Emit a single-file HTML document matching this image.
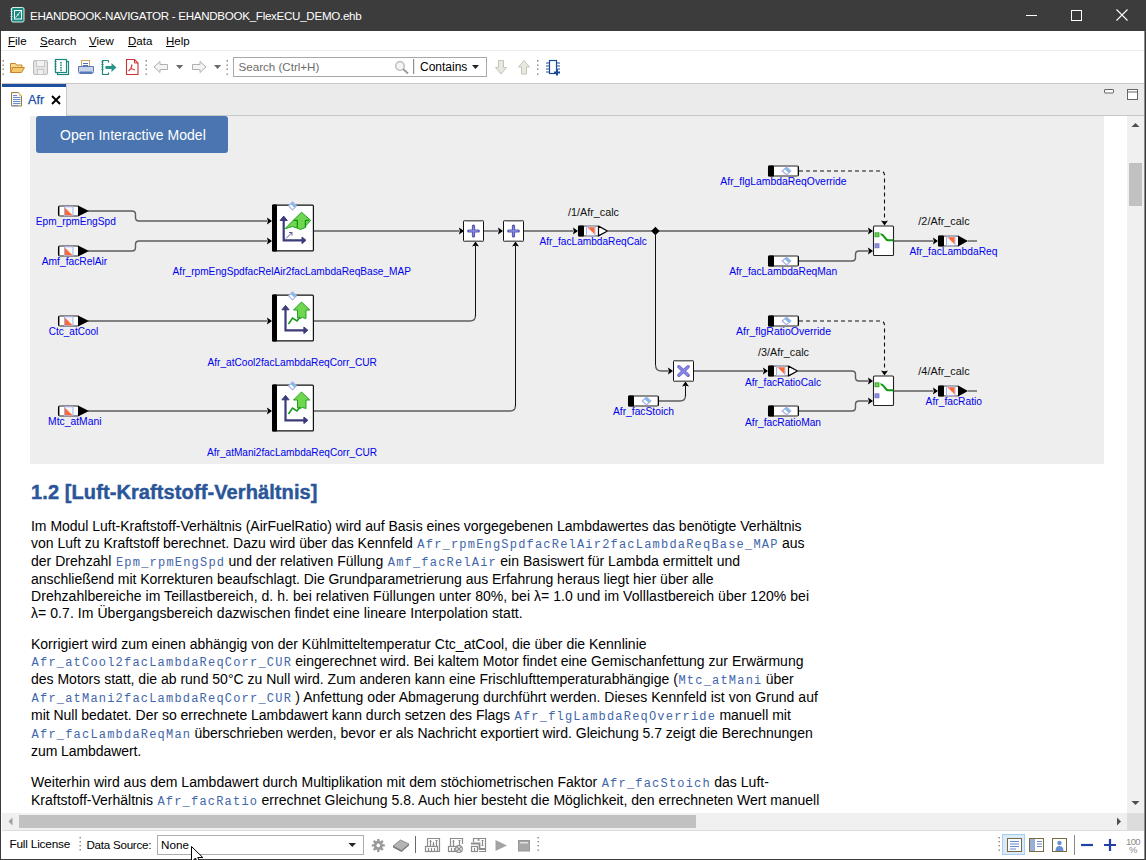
<!DOCTYPE html>
<html><head><meta charset="utf-8">
<style>
html,body{margin:0;padding:0;width:1146px;height:860px;overflow:hidden;background:#fff;font-family:"Liberation Sans",sans-serif;}
.a{position:absolute;}
.t{position:absolute;white-space:nowrap;line-height:1;}
#title{left:0;top:0;width:1146px;height:31px;background:#3c3c3c;}
#menu{left:0;top:31px;width:1146px;height:19px;background:#fff;border-bottom:1px solid #ececec;}
.mi{position:absolute;top:36px;font-size:11.5px;color:#000;}
#tabbar{left:2px;top:83px;width:1142px;height:31px;background:#ebebeb;border-top:1px solid #c8c8c8;border-bottom:1px solid #c8c8c8;}
#doc{left:2px;top:116px;width:1125px;height:697px;background:#fff;overflow:hidden;}
#vscroll{left:1127px;top:116px;width:17px;height:697px;background:#f0f0f0;}
#hscroll{left:2px;top:813px;width:1125px;height:17px;background:#f0f0f0;}
#status{left:2px;top:830px;width:1142px;height:28px;background:#fff;border-top:1px solid #dcdcdc;}
.p{position:absolute;left:29px;white-space:nowrap;font-size:14px;color:#000;line-height:1;letter-spacing:0px;}
.c{font-family:"Liberation Mono",monospace;font-size:12px;color:#3f66aa;letter-spacing:1.2px;padding-left:0.6px;margin-right:-0.6px;}
</style></head><body>
<div id="title" class="a"></div>
<div class="a" style="left:0;top:0;width:1px;height:860px;background:#3c3c3c;z-index:5"></div>
<div class="a" style="left:1144px;top:31px;width:1px;height:829px;background:#8a8a8a;z-index:5"></div>
<div class="a" style="left:1145px;top:0;width:1px;height:860px;background:#3c3c3c;z-index:5"></div>
<div class="a" style="left:0;top:859px;width:1146px;height:1px;background:#3c3c3c;z-index:5"></div>
<div class="t" style="left:30px;top:9.5px;font-size:11.6px;letter-spacing:-0.29px;color:#fff;">EHANDBOOK-NAVIGATOR - EHANDBOOK_FlexECU_DEMO.ehb</div>

<div id="menu" class="a"></div>
<div class="t mi" style="left:8px"><u>F</u>ile</div>
<div class="t mi" style="left:40px"><u>S</u>earch</div>
<div class="t mi" style="left:89px"><u>V</u>iew</div>
<div class="t mi" style="left:128px"><u>D</u>ata</div>
<div class="t mi" style="left:166px"><u>H</u>elp</div>

<div id="tabbar" class="a"></div>
<div class="a" style="left:2px;top:84px;width:64px;height:32px;background:#fff;border-right:1px solid #c8c8c8;"></div>
<div class="a" style="left:2px;top:84px;width:64px;height:3px;background:#1c4fa0;"></div>
<div class="t" style="left:28px;top:93.5px;font-size:12.6px;color:#1a4eaa;-webkit-text-stroke:0.25px #1a4eaa;">Afr</div>

<div id="doc" class="a">
  <div class="a" style="left:28px;top:0;width:1074px;height:348px;background:#eeeeee;"></div>
<div class="p" id="L0" style="top:403.2px;letter-spacing:-0.016px">Im Modul Luft-Kraftstoff-Verhältnis (AirFuelRatio) wird auf Basis eines vorgegebenen Lambdawertes das benötigte Verhältnis</div>
<div class="p" id="L1" style="top:420.2px">von Luft zu Kraftstoff berechnet. Dazu wird über das Kennfeld <span class="c">Afr_rpmEngSpdfacRelAir2facLambdaReqBase_MAP</span> aus</div>
<div class="p" id="L2" style="top:437.7px;letter-spacing:0.025px">der Drehzahl <span class="c">Epm_rpmEngSpd</span> und der relativen Füllung <span class="c">Amf_facRelAir</span> ein Basiswert für Lambda ermittelt und</div>
<div class="p" id="L3" style="top:455.7px;letter-spacing:-0.028px">anschließend mit Korrekturen beaufschlagt. Die Grundparametrierung aus Erfahrung heraus liegt hier über alle</div>
<div class="p" id="L4" style="top:472.9px;letter-spacing:0.054px">Drehzahlbereiche im Teillastbereich, d. h. bei relativen Füllungen unter 80%, bei λ= 1.0 und im Volllastbereich über 120% bei</div>
<div class="p" id="L5" style="top:490.2px;letter-spacing:0.063px">λ= 0.7. Im Übergangsbereich dazwischen findet eine lineare Interpolation statt.</div>
<div class="p" id="L6" style="top:521.2px">Korrigiert wird zum einen abhängig von der Kühlmitteltemperatur Ctc_atCool, die über die Kennlinie</div>
<div class="p" id="L7" style="top:538.2px"><span class="c">Afr_atCool2facLambdaReqCorr_CUR</span> eingerechnet wird. Bei kaltem Motor findet eine Gemischanfettung zur Erwärmung</div>
<div class="p" id="L8" style="top:556.2px">des Motors statt, die ab rund 50°C zu Null wird. Zum anderen kann eine Frischlufttemperaturabhängige (<span class="c">Mtc_atMani</span> über</div>
<div class="p" id="L9" style="top:574.2px;letter-spacing:0.033px"><span class="c">Afr_atMani2facLambdaReqCorr_CUR</span> ) Anfettung oder Abmagerung durchführt werden. Dieses Kennfeld ist von Grund auf</div>
<div class="p" id="L10" style="top:592.2px;letter-spacing:-0.025px">mit Null bedatet. Der so errechnete Lambdawert kann durch setzen des Flags <span class="c">Afr_flgLambdaReqOverride</span> manuell mit</div>
<div class="p" id="L11" style="top:610.2px;letter-spacing:-0.013px"><span class="c">Afr_facLambdaReqMan</span> überschrieben werden, bevor er als Nachricht exportiert wird. Gleichung 5.7 zeigt die Berechnungen</div>
<div class="p" id="L12" style="top:628.2px;letter-spacing:-0.073px">zum Lambdawert.</div>
<div class="p" id="L13" style="top:659.2px;letter-spacing:0.018px">Weiterhin wird aus dem Lambdawert durch Multiplikation mit dem stöchiometrischen Faktor <span class="c">Afr_facStoich</span> das Luft-</div>
<div class="p" id="L14" style="top:677.2px">Kraftstoff-Verhältnis <span class="c">Afr_facRatio</span> errechnet Gleichung 5.8. Auch hier besteht die Möglichkeit, den errechneten Wert manuell</div>
</div>

<svg class="a" style="left:0;top:0;z-index:2" width="1146" height="464" viewBox="0 0 1146 464">
<path d="M88,211 H132.0 Q135.5,211 135.5,214.5 V217.5 Q135.5,221 139.0,221 H267" fill="none" stroke="#5e5e5e" stroke-width="1.4"/>
<path d="M88,251 H132.0 Q135.5,251 135.5,247.5 V244.5 Q135.5,241 139.0,241 H267" fill="none" stroke="#5e5e5e" stroke-width="1.4"/>
<path d="M314,231 H459" fill="none" stroke="#5e5e5e" stroke-width="1.4"/>
<path d="M459,227.5 L464,231 L459,234.5 Q460.5,231 459,227.5Z" fill="#000"/>
<path d="M267,217.5 L272,221 L267,224.5 Q268.5,221 267,217.5Z" fill="#000"/>
<path d="M267,237.5 L272,241 L267,244.5 Q268.5,241 267,237.5Z" fill="#000"/>
<path d="M484,231 H498" fill="none" stroke="#5e5e5e" stroke-width="1.4"/>
<path d="M498,227.5 L503,231 L498,234.5 Q499.5,231 498,227.5Z" fill="#000"/>
<path d="M524,231 H573" fill="none" stroke="#5e5e5e" stroke-width="1.4"/>
<path d="M573,227.5 L578,231 L573,234.5 Q574.5,231 573,227.5Z" fill="#000"/>
<path d="M608,231 H868" fill="none" stroke="#5e5e5e" stroke-width="1.4"/>
<path d="M868,227.5 L873,231 L868,234.5 Q869.5,231 868,227.5Z" fill="#000"/>
<path d="M655.4,226.8 L659.6,231 L655.4,235.2 L651.2,231Z" fill="#000"/>
<path d="M655.5,231 V365" stroke="#111" stroke-width="1"/>
<path d="M655.5,365 Q655.5,371 661.5,371 H668" fill="none" stroke="#5e5e5e" stroke-width="1.4"/>
<path d="M668,367.5 L673,371 L668,374.5 Q669.5,371 668,367.5Z" fill="#000"/>
<path d="M88,321 H267" fill="none" stroke="#5e5e5e" stroke-width="1.4"/>
<path d="M267,317.5 L272,321 L267,324.5 Q268.5,321 267,317.5Z" fill="#000"/>
<path d="M314,321 H470 Q475.5,321 475.5,315.5" fill="none" stroke="#5e5e5e" stroke-width="1.4"/>
<path d="M475.5,316 V246" stroke="#111" stroke-width="1"/>
<path d="M472.0,246.5 L475.5,241.5 L479.0,246.5 Q475.5,245.0 472.0,246.5Z" fill="#000"/>
<path d="M88,411 H267" fill="none" stroke="#5e5e5e" stroke-width="1.4"/>
<path d="M267,407.5 L272,411 L267,414.5 Q268.5,411 267,407.5Z" fill="#000"/>
<path d="M314,411 H510 Q515.5,411 515.5,405.5" fill="none" stroke="#5e5e5e" stroke-width="1.4"/>
<path d="M515.5,406 V246" stroke="#111" stroke-width="1"/>
<path d="M512.0,246.5 L515.5,241.5 L519.0,246.5 Q515.5,245.0 512.0,246.5Z" fill="#000"/>
<path d="M694,371 H763" fill="none" stroke="#5e5e5e" stroke-width="1.4"/>
<path d="M763,367.5 L768,371 L763,374.5 Q764.5,371 763,367.5Z" fill="#000"/>
<path d="M659,401 H680 Q685.5,401 685.5,395.5" fill="none" stroke="#5e5e5e" stroke-width="1.4"/>
<path d="M685.5,396 V386" stroke="#111" stroke-width="1"/>
<path d="M682.0,386.5 L685.5,381.5 L689.0,386.5 Q685.5,385.0 682.0,386.5Z" fill="#000"/>
<path d="M799,171 H880 Q884.5,171 884.5,175.5 V220" fill="none" stroke="#111" stroke-width="1.1" stroke-dasharray="4,3"/>
<path d="M881.0,220.5 L884.5,225.5 L888.0,220.5 Q884.5,222.0 881.0,220.5Z" fill="#000"/>
<path d="M799,261 H852.0 Q855.5,261 855.5,257.5 V254.5 Q855.5,251 859.0,251 H868" fill="none" stroke="#5e5e5e" stroke-width="1.4"/>
<path d="M868,247.5 L873,251 L868,254.5 Q869.5,251 868,247.5Z" fill="#000"/>
<path d="M894,241 H933" fill="none" stroke="#5e5e5e" stroke-width="1.4"/>
<path d="M933,237.5 L938,241 L933,244.5 Q934.5,241 933,237.5Z" fill="#000"/>
<path d="M968,241 H977" fill="none" stroke="#5e5e5e" stroke-width="1.4"/>
<path d="M799,321 H880 Q884.5,321 884.5,325.5 V370" fill="none" stroke="#111" stroke-width="1.1" stroke-dasharray="4,3"/>
<path d="M881.0,370.5 L884.5,375.5 L888.0,370.5 Q884.5,372.0 881.0,370.5Z" fill="#000"/>
<path d="M798,371 H852.0 Q855.5,371 855.5,374.5 V377.5 Q855.5,381 859.0,381 H868" fill="none" stroke="#5e5e5e" stroke-width="1.4"/>
<path d="M868,377.5 L873,381 L868,384.5 Q869.5,381 868,377.5Z" fill="#000"/>
<path d="M799,411 H852.0 Q855.5,411 855.5,407.5 V404.5 Q855.5,401 859.0,401 H868" fill="none" stroke="#5e5e5e" stroke-width="1.4"/>
<path d="M868,397.5 L873,401 L868,404.5 Q869.5,401 868,397.5Z" fill="#000"/>
<path d="M894,391 H933" fill="none" stroke="#5e5e5e" stroke-width="1.4"/>
<path d="M933,387.5 L938,391 L933,394.5 Q934.5,391 933,387.5Z" fill="#000"/>
<path d="M968,391 H977" fill="none" stroke="#5e5e5e" stroke-width="1.4"/>
<rect x="58.6" y="206.0" width="20" height="9.99999999999999" rx="1.5" fill="#fff" stroke="#6a6a6a" stroke-width="1.3"/>
<rect x="58" y="206.4" width="1.3" height="9.199999999999989" fill="#000"/>
<rect x="64.5" y="206.7" width="8.5" height="9" fill="#f4f4fa" stroke="#a9acdf" stroke-width="1"/>
<path d="M65,207.7 L72.5,215.2 L65,215.2Z" fill="#ff6a38"/>
<path d="M78,205.4 L89,211 L78,216.6Z" fill="#000"/>
<rect x="58.6" y="246.0" width="20" height="10.000000000000018" rx="1.5" fill="#fff" stroke="#6a6a6a" stroke-width="1.3"/>
<rect x="58" y="246.4" width="1.3" height="9.200000000000017" fill="#000"/>
<rect x="64.5" y="246.7" width="8.5" height="9" fill="#f4f4fa" stroke="#a9acdf" stroke-width="1"/>
<path d="M65,247.7 L72.5,255.2 L65,255.2Z" fill="#ff6a38"/>
<path d="M78,245.4 L89,251 L78,256.6Z" fill="#000"/>
<rect x="58.6" y="316.0" width="20" height="10.000000000000046" rx="1.5" fill="#fff" stroke="#6a6a6a" stroke-width="1.3"/>
<rect x="58" y="316.4" width="1.3" height="9.200000000000045" fill="#000"/>
<rect x="64.5" y="316.7" width="8.5" height="9" fill="#f4f4fa" stroke="#a9acdf" stroke-width="1"/>
<path d="M65,317.7 L72.5,325.2 L65,325.2Z" fill="#ff6a38"/>
<path d="M78,315.4 L89,321 L78,326.6Z" fill="#000"/>
<rect x="58.6" y="406.0" width="20" height="10.000000000000046" rx="1.5" fill="#fff" stroke="#6a6a6a" stroke-width="1.3"/>
<rect x="58" y="406.4" width="1.3" height="9.200000000000045" fill="#000"/>
<rect x="64.5" y="406.7" width="8.5" height="9" fill="#f4f4fa" stroke="#a9acdf" stroke-width="1"/>
<path d="M65,407.7 L72.5,415.2 L65,415.2Z" fill="#ff6a38"/>
<path d="M78,405.4 L89,411 L78,416.6Z" fill="#000"/>
<rect x="272.6" y="205.1" width="40.8" height="45.8" rx="1" fill="#fff" stroke="#111" stroke-width="1.2"/>
<rect x="272" y="204.5" width="5" height="47" rx="1" fill="#000"/>
<path d="M292.5,202.0 L296.4,205.9 L292.5,209.8 L288.6,205.9Z" fill="#fff"/>
<path d="M292.5,202.0 L296.4,205.9 L294.5,207.8 L290.6,203.9Z" fill="#6cc0ea"/>
<path d="M292.5,202.0 L296.4,205.9 L292.5,209.8 L288.6,205.9Z" fill="none" stroke="#a9b0e6" stroke-width="1.2" stroke-linejoin="round"/>
<path d="M285,228.7 L293.4,220.3 L301.5,212.2 L310.7,220.4 L306,225.5 L305.4,227.5 L300.4,229.5 L297.3,228.2 L292.5,226.5Z" fill="#70d650" stroke="#1ea01e" stroke-width="1" stroke-linejoin="round"/>
<path d="M293.4,220.3 H297.3 V228.1 M305.4,220.3 V227.5 M305.4,220.3 H309" fill="none" stroke="#0f940f" stroke-width="1.2"/>
<path d="M286,238.5 L292,232.5 M289,232.5 L292,232.5 L292,235.5" fill="none" stroke="#4a4a88" stroke-width="0.9"/>
<path d="M283.7,218.9 L283.7,240.3 L304,240.3" fill="none" stroke="#3c3c7a" stroke-width="2.2"/>
<path d="M280.09999999999997,220.5 L283.7,216.1 L287.3,220.5Z" fill="#3c3c7a" stroke="#3c3c7a" stroke-width="1" stroke-linejoin="round"/>
<path d="M302,237.0 L306,240.3 L302,243.60000000000002Z" fill="#3c3c7a" stroke="#3c3c7a" stroke-width="1" stroke-linejoin="round"/>
<rect x="272.6" y="295.1" width="40.8" height="45.8" rx="1" fill="#fff" stroke="#111" stroke-width="1.2"/>
<rect x="272" y="294.5" width="5" height="47" rx="1" fill="#000"/>
<path d="M292.5,292.0 L296.4,295.9 L292.5,299.79999999999995 L288.6,295.9Z" fill="#fff"/>
<path d="M292.5,292.0 L296.4,295.9 L294.5,297.79999999999995 L290.6,293.9Z" fill="#6cc0ea"/>
<path d="M292.5,292.0 L296.4,295.9 L292.5,299.79999999999995 L288.6,295.9Z" fill="none" stroke="#a9b0e6" stroke-width="1.2" stroke-linejoin="round"/>
<path d="M301.5,302.0 L309.8,310.0 L306,310.0 L306,318.5 L302.5,317.5 L299.5,318.5 L297.5,318.0 L297.5,310.0 L293.5,310.0Z" fill="#70d650" stroke="#22a322" stroke-width="1"/>
<path d="M288.5,324.0 L292.5,318.0 L297,321.0 L300,317.0" fill="none" stroke="#1a9a1a" stroke-width="1.6"/>
<path d="M285.5,308.2 L285.5,330.3 L305.9,330.3" fill="none" stroke="#3c3c7a" stroke-width="2.2"/>
<path d="M281.9,309.8 L285.5,305.4 L289.1,309.8Z" fill="#3c3c7a" stroke="#3c3c7a" stroke-width="1" stroke-linejoin="round"/>
<path d="M303.9,327.0 L307.9,330.3 L303.9,333.6Z" fill="#3c3c7a" stroke="#3c3c7a" stroke-width="1" stroke-linejoin="round"/>
<rect x="272.6" y="385.1" width="40.8" height="45.8" rx="1" fill="#fff" stroke="#111" stroke-width="1.2"/>
<rect x="272" y="384.5" width="5" height="47" rx="1" fill="#000"/>
<path d="M292.5,382.0 L296.4,385.9 L292.5,389.79999999999995 L288.6,385.9Z" fill="#fff"/>
<path d="M292.5,382.0 L296.4,385.9 L294.5,387.79999999999995 L290.6,383.9Z" fill="#6cc0ea"/>
<path d="M292.5,382.0 L296.4,385.9 L292.5,389.79999999999995 L288.6,385.9Z" fill="none" stroke="#a9b0e6" stroke-width="1.2" stroke-linejoin="round"/>
<path d="M301.5,392.0 L309.8,400.0 L306,400.0 L306,408.5 L302.5,407.5 L299.5,408.5 L297.5,408.0 L297.5,400.0 L293.5,400.0Z" fill="#70d650" stroke="#22a322" stroke-width="1"/>
<path d="M288.5,414.0 L292.5,408.0 L297,411.0 L300,407.0" fill="none" stroke="#1a9a1a" stroke-width="1.6"/>
<path d="M285.5,398.2 L285.5,420.3 L305.9,420.3" fill="none" stroke="#3c3c7a" stroke-width="2.2"/>
<path d="M281.9,399.8 L285.5,395.4 L289.1,399.8Z" fill="#3c3c7a" stroke="#3c3c7a" stroke-width="1" stroke-linejoin="round"/>
<path d="M303.9,417.0 L307.9,420.3 L303.9,423.6Z" fill="#3c3c7a" stroke="#3c3c7a" stroke-width="1" stroke-linejoin="round"/>
<rect x="463.5" y="220.5" width="20" height="21" rx="1" fill="#fff" stroke="#111" stroke-width="1"/>
<rect x="464.5" y="220.0" width="18" height="1.5" fill="#666"/>
<rect x="464.5" y="240.5" width="18" height="1.5" fill="#666"/>
<path d="M468.7,231.0 H478.3 M473.5,226.0 V236.0" stroke="#5454a8" stroke-width="3.2" stroke-linecap="round"/>
<path d="M469.3,231.0 H477.7 M473.5,226.6 V235.4" stroke="#8686e6" stroke-width="1.4" stroke-linecap="round"/>
<rect x="503.5" y="220.5" width="20" height="21" rx="1" fill="#fff" stroke="#111" stroke-width="1"/>
<rect x="504.5" y="220.0" width="18" height="1.5" fill="#666"/>
<rect x="504.5" y="240.5" width="18" height="1.5" fill="#666"/>
<path d="M508.7,231.0 H518.3 M513.5,226.0 V236.0" stroke="#5454a8" stroke-width="3.2" stroke-linecap="round"/>
<path d="M509.3,231.0 H517.7 M513.5,226.6 V235.4" stroke="#8686e6" stroke-width="1.4" stroke-linecap="round"/>
<rect x="673.5" y="360.5" width="20" height="21" rx="1" fill="#fff" stroke="#111" stroke-width="1"/>
<rect x="674.5" y="360.0" width="18" height="1.5" fill="#666"/>
<rect x="674.5" y="380.5" width="18" height="1.5" fill="#666"/>
<path d="M678.9,366.7 L688.1,375.3 M688.1,366.7 L678.9,375.3" stroke="#6a6ac8" stroke-width="3.4" stroke-linecap="round"/>
<path d="M679.2,367.0 L687.8,375.0 M687.8,367.0 L679.2,375.0" stroke="#8686ea" stroke-width="1.8" stroke-linecap="round"/>
<rect x="873.5" y="226.0" width="20" height="29.5" rx="1" fill="#fff" stroke="#222" stroke-width="1.1"/>
<rect x="875" y="232.8" width="4" height="4" fill="#6ad04a" stroke="#2a9a2a" stroke-width="0.8"/>
<rect x="875" y="243.8" width="4" height="4" fill="#8d8fe0" stroke="#7070c8" stroke-width="0.8"/>
<path d="M880.5,234.3 C884,233.5 885,240.3 888,240.3 L893.5,240.3" fill="none" stroke="#119911" stroke-width="2"/>
<rect x="873.5" y="376.0" width="20" height="29.5" rx="1" fill="#fff" stroke="#222" stroke-width="1.1"/>
<rect x="875" y="382.8" width="4" height="4" fill="#6ad04a" stroke="#2a9a2a" stroke-width="0.8"/>
<rect x="875" y="393.8" width="4" height="4" fill="#8d8fe0" stroke="#7070c8" stroke-width="0.8"/>
<path d="M880.5,384.3 C884,383.5 885,390.3 888,390.3 L893.5,390.3" fill="none" stroke="#119911" stroke-width="2"/>
<rect x="578.6" y="226.1" width="20" height="9.8" rx="1" fill="#fff" stroke="#6a6a6a" stroke-width="1.3"/>
<rect x="578" y="225.5" width="6" height="11.0" rx="1" fill="#000"/>
<rect x="586.5" y="226.7" width="8.5" height="9" fill="#f4f4fa" stroke="#a9acdf" stroke-width="1"/>
<path d="M587.5,227.2 L594.5,227.2 L594.5,234.2Z" fill="#ff6a38"/>
<path d="M598.5,226.1 L607.5,231 L598.5,235.9Z" fill="#fff" stroke="#000" stroke-width="1.2" stroke-linejoin="round"/>
<rect x="938.6" y="236.1" width="20" height="9.8" rx="1" fill="#fff" stroke="#6a6a6a" stroke-width="1.3"/>
<rect x="938" y="235.5" width="6" height="11.0" rx="1" fill="#000"/>
<rect x="946.5" y="236.7" width="8.5" height="9" fill="#f4f4fa" stroke="#a9acdf" stroke-width="1"/>
<path d="M947.5,237.2 L954.5,237.2 L954.5,244.2Z" fill="#ff6a38"/>
<path d="M958,235.5 L968,241 L958,246.5Z" fill="#000"/>
<rect x="768.6" y="366.1" width="20" height="9.8" rx="1" fill="#fff" stroke="#6a6a6a" stroke-width="1.3"/>
<rect x="768" y="365.5" width="6" height="11.0" rx="1" fill="#000"/>
<rect x="776.5" y="366.7" width="8.5" height="9" fill="#f4f4fa" stroke="#a9acdf" stroke-width="1"/>
<path d="M777.5,367.2 L784.5,367.2 L784.5,374.2Z" fill="#ff6a38"/>
<path d="M788.5,366.1 L797.5,371 L788.5,375.9Z" fill="#fff" stroke="#000" stroke-width="1.2" stroke-linejoin="round"/>
<rect x="938.6" y="386.1" width="20" height="9.8" rx="1" fill="#fff" stroke="#6a6a6a" stroke-width="1.3"/>
<rect x="938" y="385.5" width="6" height="11.0" rx="1" fill="#000"/>
<rect x="946.5" y="386.7" width="8.5" height="9" fill="#f4f4fa" stroke="#a9acdf" stroke-width="1"/>
<path d="M947.5,387.2 L954.5,387.2 L954.5,394.2Z" fill="#ff6a38"/>
<path d="M958,385.5 L968,391 L958,396.5Z" fill="#000"/>
<rect x="768.6" y="166.0" width="29.8" height="9.99999999999999" rx="1.5" fill="#fff" stroke="#6a6a6a" stroke-width="1.3"/>
<rect x="797.8" y="166.4" width="1.2" height="9.199999999999989" fill="#000"/>
<rect x="768" y="165.4" width="6" height="11.199999999999989" rx="1.2" fill="#000"/>
<path d="M786.5,167.1 L790.8,171 L786.5,174.9 L782.2,171Z" fill="#fff"/>
<path d="M786.5,167.1 L790.8,171 L788.8,172.9 L784.5,169Z" fill="#6cc0ea"/>
<path d="M786.5,167.1 L790.8,171 L786.5,174.9 L782.2,171Z" fill="none" stroke="#a9b0e6" stroke-width="1.2" stroke-linejoin="round"/>
<rect x="768.6" y="256.0" width="29.8" height="10.000000000000018" rx="1.5" fill="#fff" stroke="#6a6a6a" stroke-width="1.3"/>
<rect x="797.8" y="256.4" width="1.2" height="9.200000000000017" fill="#000"/>
<rect x="768" y="255.4" width="6" height="11.200000000000017" rx="1.2" fill="#000"/>
<path d="M786.5,257.1 L790.8,261 L786.5,264.9 L782.2,261Z" fill="#fff"/>
<path d="M786.5,257.1 L790.8,261 L788.8,262.9 L784.5,259Z" fill="#6cc0ea"/>
<path d="M786.5,257.1 L790.8,261 L786.5,264.9 L782.2,261Z" fill="none" stroke="#a9b0e6" stroke-width="1.2" stroke-linejoin="round"/>
<rect x="768.6" y="316.0" width="29.8" height="10.000000000000046" rx="1.5" fill="#fff" stroke="#6a6a6a" stroke-width="1.3"/>
<rect x="797.8" y="316.4" width="1.2" height="9.200000000000045" fill="#000"/>
<rect x="768" y="315.4" width="6" height="11.200000000000045" rx="1.2" fill="#000"/>
<path d="M786.5,317.1 L790.8,321 L786.5,324.9 L782.2,321Z" fill="#fff"/>
<path d="M786.5,317.1 L790.8,321 L788.8,322.9 L784.5,319Z" fill="#6cc0ea"/>
<path d="M786.5,317.1 L790.8,321 L786.5,324.9 L782.2,321Z" fill="none" stroke="#a9b0e6" stroke-width="1.2" stroke-linejoin="round"/>
<rect x="768.6" y="406.0" width="29.8" height="10.000000000000046" rx="1.5" fill="#fff" stroke="#6a6a6a" stroke-width="1.3"/>
<rect x="797.8" y="406.4" width="1.2" height="9.200000000000045" fill="#000"/>
<rect x="768" y="405.4" width="6" height="11.200000000000045" rx="1.2" fill="#000"/>
<path d="M786.5,407.1 L790.8,411 L786.5,414.9 L782.2,411Z" fill="#fff"/>
<path d="M786.5,407.1 L790.8,411 L788.8,412.9 L784.5,409Z" fill="#6cc0ea"/>
<path d="M786.5,407.1 L790.8,411 L786.5,414.9 L782.2,411Z" fill="none" stroke="#a9b0e6" stroke-width="1.2" stroke-linejoin="round"/>
<rect x="628.6" y="396.0" width="29.8" height="10.000000000000046" rx="1.5" fill="#fff" stroke="#6a6a6a" stroke-width="1.3"/>
<rect x="657.8" y="396.4" width="1.2" height="9.200000000000045" fill="#000"/>
<rect x="628" y="395.4" width="6" height="11.200000000000045" rx="1.2" fill="#000"/>
<path d="M646.5,397.1 L650.8,401 L646.5,404.9 L642.2,401Z" fill="#fff"/>
<path d="M646.5,397.1 L650.8,401 L648.8,402.9 L644.5,399Z" fill="#6cc0ea"/>
<path d="M646.5,397.1 L650.8,401 L646.5,404.9 L642.2,401Z" fill="none" stroke="#a9b0e6" stroke-width="1.2" stroke-linejoin="round"/>
<g font-family="Liberation Sans, sans-serif" font-size="11">
<text x="75.8" y="225" text-anchor="middle" textLength="80" lengthAdjust="spacingAndGlyphs" fill="#0000ee">Epm_rpmEngSpd</text>
<text x="74.5" y="265" text-anchor="middle" textLength="65.5" lengthAdjust="spacingAndGlyphs" fill="#0000ee">Amf_facRelAir</text>
<text x="73.5" y="335" text-anchor="middle" textLength="49.5" lengthAdjust="spacingAndGlyphs" fill="#0000ee">Ctc_atCool</text>
<text x="74.8" y="425" text-anchor="middle" textLength="53.5" lengthAdjust="spacingAndGlyphs" fill="#0000ee">Mtc_atMani</text>
<text x="291.8" y="275" text-anchor="middle" textLength="238.5" lengthAdjust="spacingAndGlyphs" fill="#0000ee">Afr_rpmEngSpdfacRelAir2facLambdaReqBase_MAP</text>
<text x="292.2" y="365.5" text-anchor="middle" textLength="169.5" lengthAdjust="spacingAndGlyphs" fill="#0000ee">Afr_atCool2facLambdaReqCorr_CUR</text>
<text x="292.0" y="455.5" text-anchor="middle" textLength="170" lengthAdjust="spacingAndGlyphs" fill="#0000ee">Afr_atMani2facLambdaReqCorr_CUR</text>
<text x="593.5" y="216" text-anchor="middle" textLength="51" lengthAdjust="spacingAndGlyphs" fill="#111">/1/Afr_calc</text>
<text x="593.2" y="245" text-anchor="middle" textLength="107.5" lengthAdjust="spacingAndGlyphs" fill="#0000ee">Afr_facLambdaReqCalc</text>
<text x="783.5" y="185" text-anchor="middle" textLength="126.3" lengthAdjust="spacingAndGlyphs" fill="#0000ee">Afr_flgLambdaReqOverride</text>
<text x="783.2" y="274.5" text-anchor="middle" textLength="108" lengthAdjust="spacingAndGlyphs" fill="#0000ee">Afr_facLambdaReqMan</text>
<text x="944" y="225" text-anchor="middle" textLength="51.3" lengthAdjust="spacingAndGlyphs" fill="#111">/2/Afr_calc</text>
<text x="953.4" y="255" text-anchor="middle" textLength="88" lengthAdjust="spacingAndGlyphs" fill="#0000ee">Afr_facLambdaReq</text>
<text x="783.5" y="335" text-anchor="middle" textLength="95" lengthAdjust="spacingAndGlyphs" fill="#0000ee">Afr_flgRatioOverride</text>
<text x="783.5" y="355.5" text-anchor="middle" textLength="51" lengthAdjust="spacingAndGlyphs" fill="#111">/3/Afr_calc</text>
<text x="783" y="385.5" text-anchor="middle" textLength="76" lengthAdjust="spacingAndGlyphs" fill="#0000ee">Afr_facRatioCalc</text>
<text x="783" y="425.5" text-anchor="middle" textLength="76" lengthAdjust="spacingAndGlyphs" fill="#0000ee">Afr_facRatioMan</text>
<text x="643.5" y="415" text-anchor="middle" textLength="61" lengthAdjust="spacingAndGlyphs" fill="#0000ee">Afr_facStoich</text>
<text x="944" y="375" text-anchor="middle" textLength="51.3" lengthAdjust="spacingAndGlyphs" fill="#111">/4/Afr_calc</text>
<text x="953.8" y="405" text-anchor="middle" textLength="56.4" lengthAdjust="spacingAndGlyphs" fill="#0000ee">Afr_facRatio</text>
</g>
</svg>
<div id="vscroll" class="a"></div>
<div id="hscroll" class="a"></div>
<div id="status" class="a"></div>
<!-- title icon -->
<svg class="a" style="left:9px;top:6px" width="17" height="18" viewBox="0 0 17 18">
<rect x="2.5" y="1.5" width="12.5" height="14.5" rx="1.5" fill="#1a8a80" stroke="#d8f0ee" stroke-width="1"/>
<rect x="5" y="4" width="8" height="9.5" fill="#fff"/>
<rect x="6" y="5" width="6" height="7.5" fill="#1a8a80"/>
<path d="M6.5,11.5 L11.5,5.5 M8,8.5 L10,9" stroke="#d8f0ee" stroke-width="1"/>
<path d="M1.5,3 h2 M1.5,5.5 h2 M1.5,8 h2 M1.5,10.5 h2 M1.5,13 h2" stroke="#d8f0ee" stroke-width="0.9"/>
</svg>
<!-- window controls -->
<div class="a" style="left:1026px;top:15px;width:11px;height:1px;background:#fff"></div>
<div class="a" style="left:1071px;top:10px;width:9px;height:9px;border:1px solid #fff"></div>
<svg class="a" style="left:1116px;top:9px" width="12" height="12" viewBox="0 0 12 12"><path d="M0.5,0.5 L11.5,11.5 M11.5,0.5 L0.5,11.5" stroke="#fff" stroke-width="1.1"/></svg>

<!-- toolbar -->
<svg class="a" style="left:0;top:54px" width="570" height="26" viewBox="0 54 570 26">
<g fill="#8a8270">
<rect x="2.5" y="60" width="1.4" height="1.6"/><rect x="2.5" y="64.5" width="1.4" height="1.4"/><rect x="2.5" y="68.5" width="1.4" height="1.4"/><rect x="2.5" y="73.5" width="1.4" height="1.4"/>
<rect x="145.5" y="60" width="1.4" height="1.6"/><rect x="145.5" y="64.5" width="1.4" height="1.4"/><rect x="145.5" y="68.5" width="1.4" height="1.4"/><rect x="145.5" y="73.5" width="1.4" height="1.4"/>
<rect x="226.5" y="60" width="1.4" height="1.6"/><rect x="226.5" y="64.5" width="1.4" height="1.4"/><rect x="226.5" y="68.5" width="1.4" height="1.4"/><rect x="226.5" y="73.5" width="1.4" height="1.4"/>
<rect x="537" y="60" width="1.4" height="1.6"/><rect x="537" y="64.5" width="1.4" height="1.4"/><rect x="537" y="68.5" width="1.4" height="1.4"/><rect x="537" y="73.5" width="1.4" height="1.4"/>
</g>
<!-- folder -->
<path d="M10.5,63.5 h5 l1,1.5 h5.5 v3 h-11.5 z" fill="#f6d88e" stroke="#c8862a" stroke-width="1"/>
<path d="M10.5,72.5 L13,67.5 H24.5 L21.5,72.5 Z" fill="#f3c86a" stroke="#c8862a" stroke-width="1"/>
<path d="M10.5,64 V72.5" stroke="#c8862a" stroke-width="1"/>
<!-- save -->
<rect x="33.5" y="60.5" width="14" height="14" rx="1.5" fill="#e4e4e4" stroke="#b8b8b8" stroke-width="1"/>
<rect x="36.5" y="60.5" width="8" height="6" fill="#f2f2f2" stroke="#c0c0c0" stroke-width="0.8"/>
<rect x="37.5" y="69.5" width="6" height="5" fill="#f0f0f0" stroke="#bdbdbd" stroke-width="0.8"/>
<!-- book teal -->
<rect x="57.5" y="61.5" width="11" height="13" fill="#fff" stroke="#19877c" stroke-width="1.2"/>
<rect x="55.5" y="59.5" width="11" height="13" fill="#fff" stroke="#19877c" stroke-width="1.2"/>
<path d="M54.5,61.5 h2 M54.5,64 h2 M54.5,66.5 h2 M54.5,69 h2" stroke="#19877c" stroke-width="1"/>
<path d="M61,62 v9" stroke="#19877c" stroke-width="1.6" stroke-dasharray="1.5,1"/>
<!-- printer -->
<rect x="81.5" y="60.5" width="8" height="7" fill="#fff" stroke="#c8a860" stroke-width="1"/>
<path d="M83,63.5 h5 M83,65.5 h5" stroke="#5070b8" stroke-width="1"/>
<path d="M78.5,66.5 h15 v5 q0,2 -2,2 h-11 q-2,0 -2,-2z" fill="#c6d4ec" stroke="#5a78b8" stroke-width="1"/>
<rect x="80" y="71.5" width="12" height="2" fill="#5a78b8"/>
<!-- export teal -->
<path d="M108.5,60.5 h-6 v14 h6 M108.5,60.5 v2 M108.5,74.5 v-2" fill="#fff" stroke="#19877c" stroke-width="1.2"/>
<path d="M101.5,62 h2 M101.5,64.5 h2 M101.5,67 h2 M101.5,69.5 h2" stroke="#19877c" stroke-width="1"/>
<path d="M105.5,66 h6 v-3 l5,4.5 l-5,4.5 v-3 h-6z" fill="#2a9488"/>
<!-- pdf -->
<path d="M126.5,59.5 h8 l3.5,3.5 v11.5 h-11.5z" fill="#fff" stroke="#cc3333" stroke-width="1.1"/>
<path d="M134.5,59.5 v3.5 h3.5" fill="none" stroke="#cc3333" stroke-width="1"/>
<path d="M132,64.5 L131,68.5 L128.5,71 M131,68.5 L135,70" fill="none" stroke="#d84040" stroke-width="1.3"/>
<!-- back/forward arrows -->
<path d="M154,67 L160,61.5 V64.5 H167.5 V69.5 H160 V72.5 Z" fill="#f4f4f4" stroke="#b0b0b0" stroke-width="1" stroke-linejoin="round"/>
<path d="M176,65 h7.2 l-3.6,4z" fill="#6a6a6a"/>
<path d="M206,67 L200,61.5 V64.5 H192.5 V69.5 H200 V72.5 Z" fill="#f4f4f4" stroke="#b0b0b0" stroke-width="1" stroke-linejoin="round"/>
<path d="M214,65 h7.2 l-3.6,4z" fill="#6a6a6a"/>
<!-- search box -->
<rect x="233.5" y="57.5" width="253" height="19" fill="#fff" stroke="#a8a8a8" stroke-width="1"/>
<circle cx="400" cy="66" r="4.3" fill="#f4f4f4" stroke="#b4b4b4" stroke-width="1.3"/>
<path d="M403,69 L408,73.5" stroke="#9a9a9a" stroke-width="1.8"/>
<path d="M413.7,59 V74" stroke="#777" stroke-width="1"/>
<path d="M472,65 h7 l-3.5,4z" fill="#222"/>
<!-- down/up arrows -->
<path d="M498.5,60.5 h5 v7 h3 l-5.5,6.5 l-5.5,-6.5 h3z" fill="#e8e8e0" stroke="#c4c4b8" stroke-width="1" stroke-linejoin="round"/>
<path d="M521.5,74 h5 v-7 h3 l-5.5,-6.5 l-5.5,6.5 h3z" fill="#e8e8e0" stroke="#c4c4b8" stroke-width="1" stroke-linejoin="round"/>
<!-- blue icon -->
<rect x="549.5" y="60.5" width="7" height="13" fill="#fff" stroke="#1a4a9a" stroke-width="1.2"/>
<path d="M546,63 h3 M546,66 h3 M546,69 h3 M546,72 h3 M557,63 h3 M557,66 h3 M557,69 h3" stroke="#1a4a9a" stroke-width="1"/>
<path d="M554,72.5 h6 M557,69.5 v6" stroke="#1a4a9a" stroke-width="2"/>
</svg>
<div class="t" style="left:238.5px;top:61px;font-size:11.6px;color:#6d6d6d;">Search (Ctrl+H)</div>
<div class="t" style="left:420px;top:60.5px;font-size:12px;color:#000;">Contains</div>

<!-- tab icons -->
<svg class="a" style="left:9.5px;top:91.5px" width="14" height="16" viewBox="0 0 14 16">
<path d="M1.5,0.5 h7 l3,3 v10.5 h-10z" fill="#f4f6fb" stroke="#9c7c40" stroke-width="1"/>
<path d="M9,0.5 v3.5 h3.5z" fill="#e8c878"/>
<path d="M3,3.5 h4 M3,5.5 h7.5 M3,7.5 h7.5 M3,9.5 h7.5 M3,11.5 h7.5 M3,13.5 h5" stroke="#6a8cc8" stroke-width="1"/>
</svg>
<svg class="a" style="left:50.5px;top:94.5px" width="10" height="10" viewBox="0 0 10 10"><path d="M1,1 L9,9 M9,1 L1,9" stroke="#000" stroke-width="1.9"/></svg>
<svg class="a" style="left:1103px;top:89px" width="36" height="12" viewBox="0 0 36 12">
<rect x="1.5" y="0.5" width="9" height="3.5" rx="0.5" fill="#fff" stroke="#666" stroke-width="1"/>
<rect x="24.5" y="0.5" width="10" height="10" fill="#fff" stroke="#666" stroke-width="1"/>
<path d="M24.5,3 h10" stroke="#666" stroke-width="1"/>
</svg>

<!-- button + heading (page coords) -->
<div class="a" style="left:36px;top:116px;width:192px;height:37px;background:#4a75b0;border-radius:3px;z-index:3"></div>
<div class="t" style="left:60px;top:128px;font-size:14px;color:#fff;z-index:3;letter-spacing:0.05px">Open Interactive Model</div>
<div class="t" style="left:31px;top:482px;font-size:20px;font-weight:bold;color:#2a5699;letter-spacing:0.1px;-webkit-text-stroke:0.45px #2a5699">1.2 [Luft-Kraftstoff-Verhältnis]</div>

<!-- scrollbars -->
<div class="a" style="left:1129px;top:163px;width:13px;height:43px;background:#c1c1c1;"></div>
<svg class="a" style="left:1127px;top:116px" width="17" height="697" viewBox="0 0 17 697">
<path d="M4.5,11 h8 l-4,-4z" fill="#505050"/>
<path d="M4.5,685 h8 l-4,4z" fill="#505050"/>
</svg>
<div class="a" style="left:19px;top:815px;width:677px;height:13px;background:#c1c1c1;"></div>
<svg class="a" style="left:2px;top:813px" width="1142" height="17" viewBox="0 0 1142 17">
<path d="M10.5,4.5 v8 l-4,-4z" fill="#a0a0a0"/>
<path d="M1115,4.5 v8 l4,-4z" fill="#505050"/>
<rect x="1125" y="0" width="17" height="17" fill="#dcdcdc"/>
</svg>
<!-- status bar -->
<div class="t" style="left:9.5px;top:839px;font-size:11.8px;letter-spacing:-0.2px;color:#000;">Full License</div>
<div class="t" style="left:86.5px;top:839px;font-size:11.6px;letter-spacing:-0.25px;color:#000;">Data Source:</div>
<div class="a" style="left:157px;top:835px;width:205px;height:18px;border:1px solid #adadad;background:#fff"></div>
<div class="t" style="left:161px;top:839px;font-size:11.7px;color:#000;">None</div>
<svg class="a" style="left:0;top:830px" width="1146" height="30" viewBox="0 830 1146 30">
<g fill="#8a8270">
<rect x="79.5" y="837" width="1.4" height="1.4"/><rect x="79.5" y="841" width="1.4" height="1.4"/><rect x="79.5" y="845" width="1.4" height="1.4"/><rect x="79.5" y="849" width="1.4" height="1.4"/>
<rect x="537.5" y="837" width="1.4" height="1.4"/><rect x="537.5" y="841" width="1.4" height="1.4"/><rect x="537.5" y="845" width="1.4" height="1.4"/><rect x="537.5" y="849.5" width="1.4" height="1.4"/>
<rect x="998.5" y="837" width="1.4" height="1.4"/><rect x="998.5" y="841" width="1.4" height="1.4"/><rect x="998.5" y="845" width="1.4" height="1.4"/><rect x="998.5" y="849.5" width="1.4" height="1.4"/>
</g>
<path d="M348.5,843 h7.5 l-3.75,4z" fill="#222"/>
<!-- gear -->
<g transform="translate(378.3,845.4)">
<circle r="4.6" fill="#9a9a9a"/>
<path d="M0,-6.5 V6.5 M-6.5,0 H6.5 M-4.6,-4.6 L4.6,4.6 M4.6,-4.6 L-4.6,4.6" stroke="#9a9a9a" stroke-width="2.4"/>
<circle r="1.8" fill="#fff"/>
</g>
<!-- disk -->
<path d="M393,846 L400.5,840 L409,844 L401.5,850.5z" fill="#b4b4b4" stroke="#7a7a7a" stroke-width="0.8"/>
<path d="M393,846 v1.5 l8.5,4.5 l7.5,-6.5 v-1.5 l-7.5,6.5z" fill="#777"/>
<path d="M415.5,836 V853" stroke="#6a6a6a" stroke-width="1"/>
<!-- mixer icons -->
<g fill="none" stroke="#8c8c8c" stroke-width="1.2">
<path d="M427.5,846 V838.5 H439.5 V851.5 H438"/>
<rect x="425.5" y="846.5" width="12" height="5" fill="#fff"/>
<path d="M428.5,848 v3.5 M431.5,848 v3.5 M434.5,848 v3.5 M430.5,840 v6 M433.5,842 v4 M436.5,840 v6"/>
<path d="M429.5,841.5 h2 M432.5,845 h2 M435.5,840.5 h2"/>
<path d="M450.5,846 V838.5 H462.5 V844"/>
<rect x="448.5" y="846.5" width="9" height="5" fill="#fff"/>
<path d="M451.5,848 v3.5 M454.5,848 v3.5 M453.5,840 v6 M459.5,840 v5 M452.5,841.5 h2 M458.5,840.5 h2"/>
<circle cx="459" cy="849" r="3.3" fill="#fff"/>
<path d="M457,847 l4,4 M461,847 l-4,4"/>
<path d="M473.5,842 V838.5 H485.5 V851.5 H479"/>
<path d="M477.5,840.5 l1,-1 l1,1 M482.5,840 v6 M481.5,840.5 h2 M481.5,845.5 h2"/>
<path d="M471,843.5 H479.5 V849 H486" stroke-width="1.8"/>
<rect x="471.5" y="846.5" width="6" height="5" fill="#fff"/>
<path d="M474.5,848 v3.5"/>
</g>
<path d="M495.5,840 L507,845.5 L495.5,851z" fill="#a4a4a4"/>
<rect x="518.5" y="840.5" width="11" height="10.5" fill="#a8a8a8" stroke="#959595" stroke-width="1"/>
<rect x="520" y="842" width="8" height="1.5" fill="#e0e0e0"/>
<!-- right icons -->
<rect x="1002.5" y="834.5" width="22" height="20" fill="#dbeaf8" stroke="#a6cdf0" stroke-width="1"/>
<rect x="1007.5" y="838.5" width="14" height="13" fill="#f8fbff" stroke="#7a6a40" stroke-width="1"/>
<path d="M1010,841.5 h9 M1010,844 h9 M1010,846.5 h9 M1010,849 h6" stroke="#5a80c0" stroke-width="0.9"/>
<rect x="1029.5" y="838.5" width="14" height="13" fill="#fff" stroke="#7a6a40" stroke-width="1"/>
<rect x="1030" y="839" width="5" height="12" fill="#98b0d8"/>
<path d="M1037,841.5 h5 M1037,844 h5 M1037,846.5 h5" stroke="#5a80c0" stroke-width="0.9"/>
<rect x="1052.5" y="838.5" width="14" height="13" fill="#fff" stroke="#7a6a40" stroke-width="1"/>
<circle cx="1059.5" cy="843" r="2.2" fill="#6890d0"/>
<path d="M1055.5,851 q0,-5 4,-5 q4,0 4,5z" fill="#6890d0"/>
<path d="M1074.5,835 V855" stroke="#8a8a8a" stroke-width="1"/>
<path d="M1081,845 h12" stroke="#2040a8" stroke-width="2.2"/>
<path d="M1104,845 h12 M1110,839 v12" stroke="#2040a8" stroke-width="2.2"/>
</svg>
<div class="t" style="left:1126px;top:837.5px;font-size:9.5px;line-height:8px;color:#8c8c8c;text-align:center;width:14px;letter-spacing:-0.6px">100<br>%</div>
<!-- mouse cursor -->
<svg class="a" style="left:191px;top:846px;z-index:10" width="14" height="14" viewBox="0 0 14 14">
<path d="M0.5,0.5 V16 L4.5,12 L7.5,19 L9.5,18 L6.8,11.5 H11.8 Z" fill="#fff" stroke="#000" stroke-width="1"/>
</svg>


</body></html>
